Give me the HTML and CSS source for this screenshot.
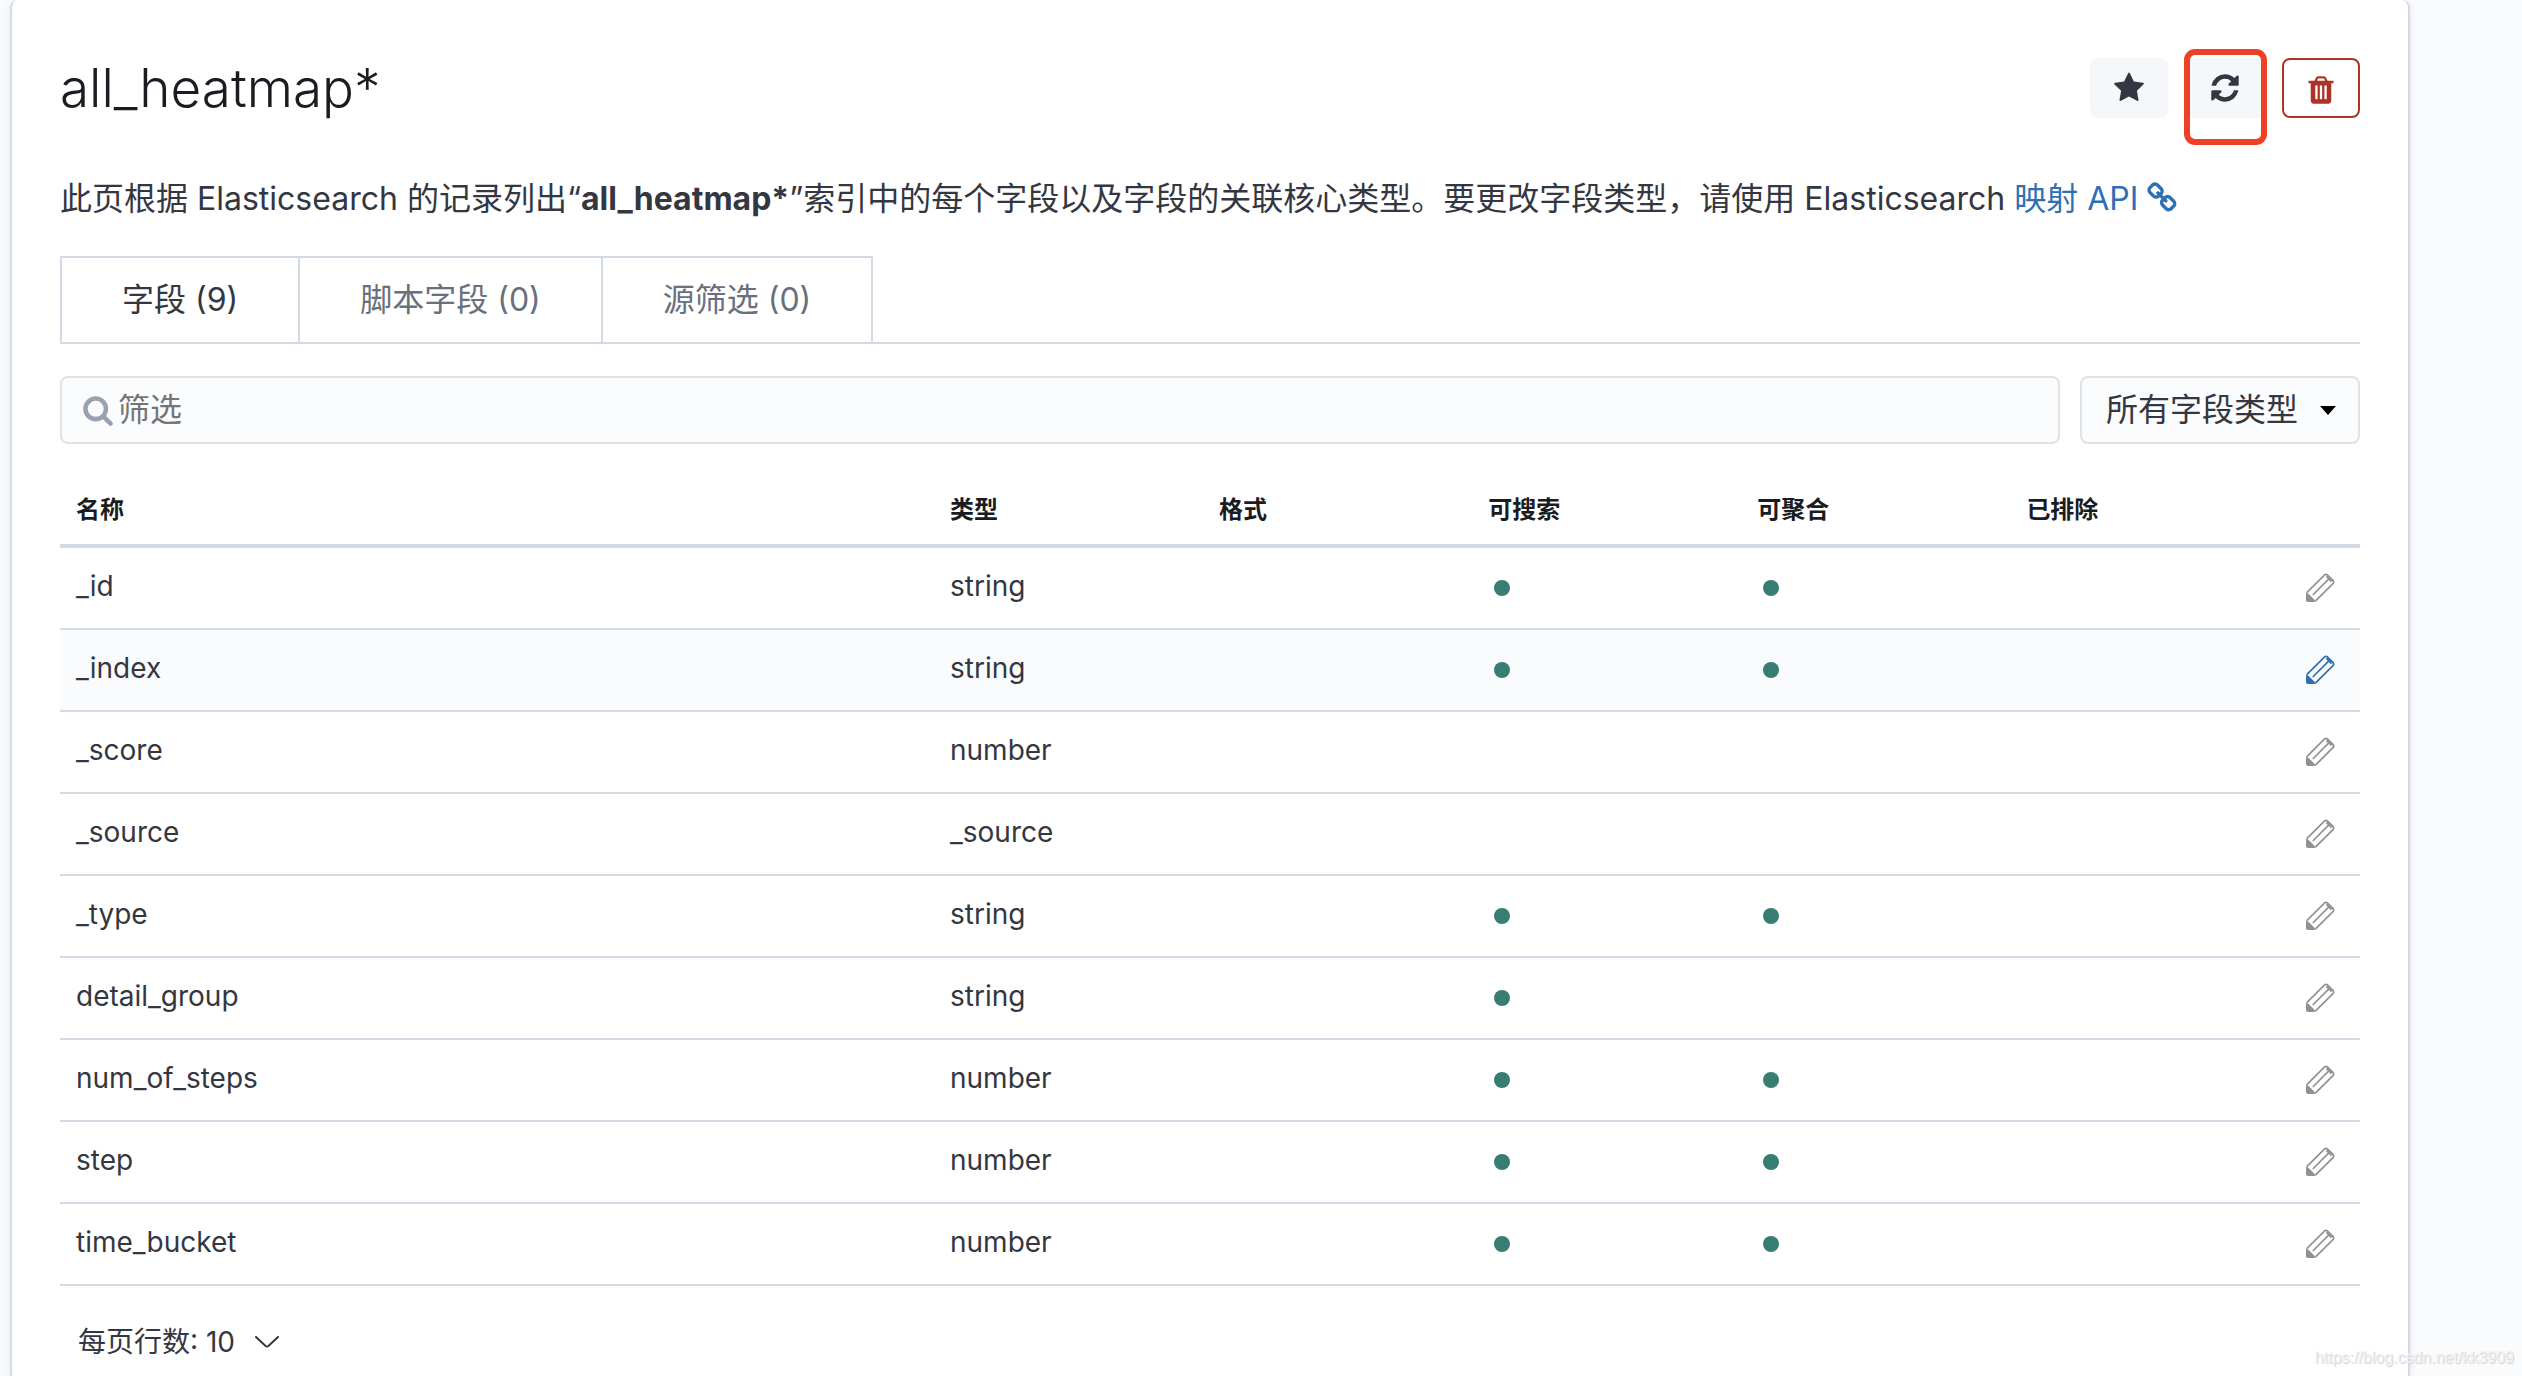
FILE: index.html
```html
<!DOCTYPE html>
<html lang="zh-CN">
<head>
<meta charset="utf-8">
<meta name="viewport" content="width=device-width, initial-scale=1">
<title>all_heatmap*</title>
<link rel="stylesheet" href="styles.css">
</head>
<body>
<svg class="sprite" aria-hidden="true">
  <symbol id="star" viewBox="0 0 1792 1792"><path d="M1728 647q0 22-26 48l-363 354 86 500q1 7 1 20 0 21-10.5 35.5t-30.5 14.5q-19 0-40-12l-449-236-449 236q-22 12-40 12-21 0-31.5-14.5t-10.5-35.5q0-6 2-20l86-500-364-354q-25-27-25-48 0-37 56-46l502-73 225-455q19-41 49-41t49 41l225 455 502 73q56 9 56 46z"/></symbol>
  <symbol id="refresh" viewBox="0 0 1792 1792"><path d="M1639 1056q0 5-1 7-64 268-268 434.5t-478 166.5q-146 0-282.5-55t-243.5-157l-129 129q-19 19-45 19t-45-19-19-45v-448q0-26 19-45t45-19h448q26 0 45 19t19 45-19 45l-137 137q71 66 161 102t187 36q134 0 250-65t186-179q11-17 53-117 8-23 30-23h192q13 0 22.5 9.5t9.5 22.5zm25-800v448q0 26-19 45t-45 19h-448q-26 0-45-19t-19-45 19-45l138-138q-148-137-349-137-134 0-250 65t-186 179q-11 17-53 117-8 23-30 23h-199q-13 0-22.5-9.5t-9.5-22.5v-7q65-268 270-434.5t480-166.5q146 0 284 55.5t245 156.5l130-129q19-19 45-19t45 19 19 45z"/></symbol>
  <symbol id="trash" viewBox="0 0 1792 1792"><path d="M704 1376v-704q0-14-9-23t-23-9h-64q-14 0-23 9t-9 23v704q0 14 9 23t23 9h64q14 0 23-9t9-23zm256 0v-704q0-14-9-23t-23-9h-64q-14 0-23 9t-9 23v704q0 14 9 23t23 9h64q14 0 23-9t9-23zm256 0v-704q0-14-9-23t-23-9h-64q-14 0-23 9t-9 23v704q0 14 9 23t23 9h64q14 0 23-9t9-23zm-544-992h448l-48-117q-7-9-17-11h-317q-10 2-17 11zm928 32v64q0 14-9 23t-23 9h-96v948q0 83-47 143.5t-113 60.5h-832q-66 0-113-58.5t-47-141.5v-952h-96q-14 0-23-9t-9-23v-64q0-14 9-23t23-9h309l70-167q15-37 54-63t79-26h320q40 0 79 26t54 63l70 167h309q14 0 23 9t9 23z"/></symbol>
  <symbol id="chain" viewBox="0 0 1792 1792"><path d="M1456 1216q0-40-28-68l-208-208q-28-28-68-28-42 0-72 32 3 3 19 18.5t21.5 21.5 15 19 13 25.5 3.5 27.5q0 40-28 68t-68 28q-15 0-27.5-3.5t-25.5-13-19-15-21.5-21.5-18.5-19q-33 31-33 73 0 40 28 68l206 207q27 27 68 27 40 0 68-26l147-146q28-28 28-67zm-703-705q0-40-28-68l-206-207q-28-28-68-28-39 0-68 27l-147 146q-28 28-28 67 0 40 28 68l208 208q27 27 68 27 42 0 72-31-3-3-19-18.5t-21.5-21.5-15-19-13-25.5-3.5-27.5q0-40 28-68t68-28q15 0 27.5 3.5t25.5 13 19 15 21.5 21.5 18.5 19q33-31 33-73zm895 705q0 120-85 203l-147 146q-83 83-203 83-121 0-204-85l-206-207q-83-83-83-203 0-123 88-209l-88-88q-86 88-208 88-120 0-204-84l-208-208q-84-84-84-204t85-203l147-146q83-83 203-83 121 0 204 85l206 207q83 83 83 203 0 123-88 209l88 88q86-88 208-88 120 0 204 84l208 208q84 84 84 204z"/></symbol>
  <symbol id="search" viewBox="0 0 1792 1792"><path d="M1216 832q0-185-131.5-316.5t-316.5-131.5-316.5 131.5-131.5 316.5 131.5 316.5 316.5 131.5 316.5-131.5 131.5-316.5zm512 832q0 52-38 90t-90 38q-54 0-90-38l-343-342q-179 124-399 124-143 0-273.5-55.5t-225-150-150-225-55.5-273.5 55.5-273.5 150-225 225-150 273.5-55.5 273.5 55.5 225 150 150 225 55.5 273.5q0 220-124 399l343 343q37 37 37 90z"/></symbol>
  <symbol id="pencil" viewBox="0 0 32 32"><path d="M2.8 20.6 20.6 2.8q1.4-1 2.8 0l5.8 5.8q1 1.400 0 2.800L11.400 29.200M24.600 7.200 8.800 23M22.400 4.400l5.200 5.200" fill="none" stroke="currentColor" stroke-width="1.700"/><path d="M2 20.400l2.400 1.400 5.800 5.800 1.400 2.400H4q-2 0-2-2z"/></symbol>
</svg>

<main class="panel">
  <header class="head">
    <h1 class="title">all_heatmap*</h1>
    <div class="actions">
      <button class="btn" type="button" aria-label="设为默认索引"><svg class="icon"><use href="#star"/></svg></button>
      <button class="btn btn-marked" type="button" aria-label="刷新字段列表"><svg class="icon"><use href="#refresh"/></svg></button>
      <button class="btn btn-danger" type="button" aria-label="删除索引模式"><svg class="icon"><use href="#trash"/></svg></button>
    </div>
  </header>

  <p class="intro">此页根据 Elasticsearch 的记录列出“<strong>all_heatmap*</strong>”索引中的每个字段以及字段的关联核心类型。要更改字段类型，请使用 Elasticsearch <a class="link" href="#mapping">映射 API <svg class="icon link-icon" aria-hidden="true"><use href="#chain"/></svg></a></p>

  <nav class="tabs" role="tablist">
    <button class="tab tab-active" type="button" role="tab" aria-selected="true">字段 (9)</button>
    <button class="tab" type="button" role="tab" aria-selected="false">脚本字段 (0)</button>
    <button class="tab" type="button" role="tab" aria-selected="false">源筛选 (0)</button>
  </nav>

  <div class="filters">
    <label class="search">
      <svg class="icon search-icon" aria-hidden="true"><use href="#search"/></svg>
      <input class="search-input" type="text" placeholder="筛选" aria-label="筛选">
    </label>
    <div class="select-wrap">
      <select class="select" aria-label="字段类型"><option>所有字段类型</option></select>
      <svg class="caret" viewBox="0 0 16 9" aria-hidden="true"><path d="M0 0h16L8 9z"/></svg>
    </div>
  </div>

  <table class="fields">
    <colgroup><col class="col-name"><col class="col-attr"><col class="col-attr"><col class="col-attr"><col class="col-attr"><col></colgroup>
    <thead>
      <tr><th scope="col">名称</th><th scope="col">类型</th><th scope="col">格式</th><th scope="col">可搜索</th><th scope="col">可聚合</th><th scope="col">已排除</th></tr>
    </thead>
    <tbody>
      <tr><td>_id</td><td>string</td><td></td><td><span class="dot"></span></td><td><span class="dot"></span></td><td class="edit-cell"><button class="edit" type="button" aria-label="编辑 _id"><svg class="icon"><use href="#pencil"/></svg></button></td></tr>
      <tr class="row-hover"><td>_index</td><td>string</td><td></td><td><span class="dot"></span></td><td><span class="dot"></span></td><td class="edit-cell"><button class="edit" type="button" aria-label="编辑 _index"><svg class="icon"><use href="#pencil"/></svg></button></td></tr>
      <tr><td>_score</td><td>number</td><td></td><td></td><td></td><td class="edit-cell"><button class="edit" type="button" aria-label="编辑 _score"><svg class="icon"><use href="#pencil"/></svg></button></td></tr>
      <tr><td>_source</td><td>_source</td><td></td><td></td><td></td><td class="edit-cell"><button class="edit" type="button" aria-label="编辑 _source"><svg class="icon"><use href="#pencil"/></svg></button></td></tr>
      <tr><td>_type</td><td>string</td><td></td><td><span class="dot"></span></td><td><span class="dot"></span></td><td class="edit-cell"><button class="edit" type="button" aria-label="编辑 _type"><svg class="icon"><use href="#pencil"/></svg></button></td></tr>
      <tr><td>detail_group</td><td>string</td><td></td><td><span class="dot"></span></td><td></td><td class="edit-cell"><button class="edit" type="button" aria-label="编辑 detail_group"><svg class="icon"><use href="#pencil"/></svg></button></td></tr>
      <tr><td>num_of_steps</td><td>number</td><td></td><td><span class="dot"></span></td><td><span class="dot"></span></td><td class="edit-cell"><button class="edit" type="button" aria-label="编辑 num_of_steps"><svg class="icon"><use href="#pencil"/></svg></button></td></tr>
      <tr><td>step</td><td>number</td><td></td><td><span class="dot"></span></td><td><span class="dot"></span></td><td class="edit-cell"><button class="edit" type="button" aria-label="编辑 step"><svg class="icon"><use href="#pencil"/></svg></button></td></tr>
      <tr><td>time_bucket</td><td>number</td><td></td><td><span class="dot"></span></td><td><span class="dot"></span></td><td class="edit-cell"><button class="edit" type="button" aria-label="编辑 time_bucket"><svg class="icon"><use href="#pencil"/></svg></button></td></tr>
    </tbody>
  </table>

  <button class="page-size" type="button">每页行数: 10
    <svg class="chevron" viewBox="0 0 24 12" aria-hidden="true"><path d="M1 1l9.600 9q1.400 1 2.800 0L23 1"/></svg>
  </button>
</main>
<div class="watermark">https://blog.csdn.net/kk3909</div>
</body>
</html>
```
FILE: styles.css
```css
* {
  box-sizing: border-box;
}

body {
  margin: 0;
  position: relative;
  min-height: 100vh;
  background: #fafbfd;
  color: #343741;
  font-family: "Inter", "Noto Sans CJK SC", sans-serif;
  font-size: 32px;
  line-height: 48px;
}

button,
input,
select {
  font: inherit;
  color: inherit;
}

button {
  cursor: pointer;
}

.sprite {
  position: absolute;
  width: 0;
  height: 0;
}

.icon {
  display: block;
  width: 32px;
  height: 32px;
  fill: currentColor;
}

.panel {
  min-height: 100vh;
  margin: 0 112px 0 10px;
  padding: 48px 48px 0;
  background: #fff;
  border: solid #d3dae6;
  border-width: 0 2px;
  border-radius: 8px 8px 0 0;
  box-shadow: 0 2px 8px rgba(152, 162, 179, 0.2);
}

/* Heading and actions */
.head {
  display: flex;
  justify-content: space-between;
}

.title {
  margin: 0;
  color: #1a1c21;
  font-size: 53px;
  font-weight: 300;
  line-height: 80px;
}

.actions {
  display: flex;
  align-items: center;
  gap: 18px;
}

.btn {
  position: relative;
  display: flex;
  align-items: center;
  justify-content: center;
  width: 78px;
  height: 60px;
  padding: 0;
  background: #f5f7fa;
  border: 0;
  border-radius: 8px;
}

/* Highlight frame drawn over the refresh button */
.btn-marked::after {
  content: "";
  position: absolute;
  inset: -9px -3px -27px -2px;
  border: 6px solid #ec4126;
  border-radius: 11px;
}

.btn-danger {
  padding-top: 4px;
  background: #fff;
  border: 2px solid #ac3427;
  color: #ac3427;
}

.intro {
  margin: 47px 0 33px;
}

.intro strong {
  font-weight: 700;
}

.link {
  color: #2f6fb3;
  text-decoration: none;
}

.link-icon {
  display: inline-block;
  vertical-align: -4px;
}

/* Tabs */
.tabs {
  display: flex;
  border-bottom: 2px solid #d3dae6;
}

.tab {
  height: 86px;
  padding: 0 60px;
  background: none;
  border: solid #d3dae6;
  border-width: 2px 2px 0 0;
  color: #69707d;
}

.tab:first-child {
  border-left-width: 2px;
}

.tab-active {
  color: #343741;
}

/* Filters */
.filters {
  display: flex;
  gap: 20px;
  margin: 32px 0;
}

.search,
.select {
  height: 68px;
  background: #fbfcfe;
  border: 2px solid #e1e2e4;
  border-radius: 8px;
}

.search {
  flex: 1;
  display: flex;
  align-items: center;
  gap: 4px;
  padding: 0 20px;
}

.search-icon {
  color: #98a2b3;
}

.search-input {
  flex: 1;
  padding: 0;
  background: none;
  border: 0;
  outline: 0;
}

.search-input::placeholder {
  color: #757575;
}

.select-wrap {
  display: grid;
  align-items: center;
  width: 280px;
}

.select,
.caret {
  grid-area: 1 / 1;
}

.select {
  width: 100%;
  padding: 0 24px;
  appearance: none;
}

.caret {
  justify-self: end;
  width: 16px;
  height: 9px;
  margin-right: 24px;
  fill: #000;
  pointer-events: none;
}

/* Field table */
.fields {
  width: 100%;
  table-layout: fixed;
  border-spacing: 0;
  font-size: 28px;
  line-height: 44px;
}

.col-name {
  width: 38%;
}

.col-attr {
  width: 11.7%;
}

.fields th {
  padding: 12px 16px;
  border-bottom: 4px solid #d3dae6;
  color: #1a1c21;
  font-size: 24px;
  font-weight: 700;
  text-align: left;
}

.fields td {
  height: 82px;
  padding: 16px 16px 20px;
  border-bottom: 2px solid #d3dae6;
  vertical-align: top;
}

.row-hover {
  background: #fafbfd;
}

.dot {
  display: inline-block;
  width: 16px;
  height: 16px;
  margin-left: 6px;
  border-radius: 50%;
  background: #387d74;
  vertical-align: middle;
}

.fields .edit-cell {
  padding-right: 24px;
  text-align: right;
}

.edit {
  padding: 0;
  background: none;
  border: 0;
  color: #919191;
  vertical-align: middle;
}

.row-hover .edit {
  color: #2f6fb3;
}

.page-size {
  display: flex;
  align-items: center;
  gap: 20px;
  margin: 34px 0 0 18px;
  padding: 0;
  background: none;
  border: 0;
  font-size: 28px;
  line-height: 44px;
}

.chevron {
  width: 24px;
  height: 12px;
  fill: none;
  stroke: currentColor;
  stroke-width: 2;
  stroke-linecap: round;
}

.watermark {
  position: absolute;
  right: 8px;
  bottom: 8px;
  color: #f0f0f1;
  font-family: "Liberation Sans", sans-serif;
  font-size: 16px;
  line-height: 20px;
  text-shadow: 1px 1px 1px #d0d0d2;
}
```
